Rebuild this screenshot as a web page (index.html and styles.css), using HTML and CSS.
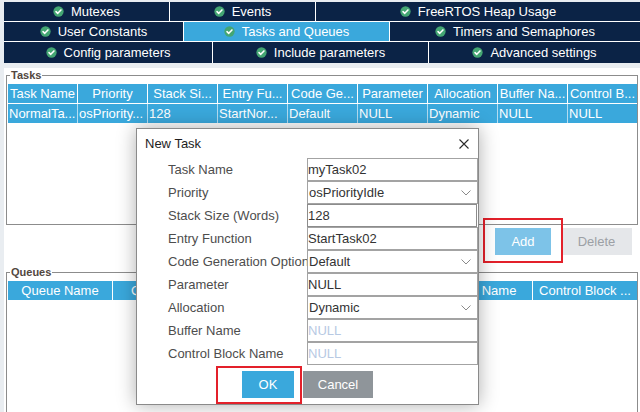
FILE: index.html
```html
<!DOCTYPE html>
<html lang="en">
<head>
<meta charset="utf-8">
<title>FreeRTOS Configuration</title>
<link rel="stylesheet" href="styles.css">
</head>
<body>
<div class="app">
  <nav class="tabs">
    <div class="tab-row">
      <div class="tab w-mutexes"><svg class="ok" viewBox="0 0 12 12"><circle cx="6" cy="6" r="5.6" fill="#44a673"/><path d="M3.3 6.1 5.2 8 8.7 4.3" fill="none" stroke="#fff" stroke-width="1.7" stroke-linecap="round" stroke-linejoin="round"/></svg>Mutexes</div>
      <div class="tab w-events"><svg class="ok" viewBox="0 0 12 12"><circle cx="6" cy="6" r="5.6" fill="#44a673"/><path d="M3.3 6.1 5.2 8 8.7 4.3" fill="none" stroke="#fff" stroke-width="1.7" stroke-linecap="round" stroke-linejoin="round"/></svg>Events</div>
      <div class="tab grow"><svg class="ok" viewBox="0 0 12 12"><circle cx="6" cy="6" r="5.6" fill="#44a673"/><path d="M3.3 6.1 5.2 8 8.7 4.3" fill="none" stroke="#fff" stroke-width="1.7" stroke-linecap="round" stroke-linejoin="round"/></svg>FreeRTOS Heap Usage</div>
    </div>
    <div class="tab-row">
      <div class="tab w-user"><svg class="ok" viewBox="0 0 12 12"><circle cx="6" cy="6" r="5.6" fill="#44a673"/><path d="M3.3 6.1 5.2 8 8.7 4.3" fill="none" stroke="#fff" stroke-width="1.7" stroke-linecap="round" stroke-linejoin="round"/></svg>User Constants</div>
      <div class="tab w-tasks active"><svg class="ok" viewBox="0 0 12 12"><circle cx="6" cy="6" r="5.6" fill="#44a673"/><path d="M3.3 6.1 5.2 8 8.7 4.3" fill="none" stroke="#fff" stroke-width="1.7" stroke-linecap="round" stroke-linejoin="round"/></svg>Tasks and Queues</div>
      <div class="tab grow"><svg class="ok" viewBox="0 0 12 12"><circle cx="6" cy="6" r="5.6" fill="#44a673"/><path d="M3.3 6.1 5.2 8 8.7 4.3" fill="none" stroke="#fff" stroke-width="1.7" stroke-linecap="round" stroke-linejoin="round"/></svg>Timers and Semaphores</div>
    </div>
    <div class="tab-row last">
      <div class="tab w-config"><svg class="ok" viewBox="0 0 12 12"><circle cx="6" cy="6" r="5.6" fill="#44a673"/><path d="M3.3 6.1 5.2 8 8.7 4.3" fill="none" stroke="#fff" stroke-width="1.7" stroke-linecap="round" stroke-linejoin="round"/></svg>Config parameters</div>
      <div class="tab w-include"><svg class="ok" viewBox="0 0 12 12"><circle cx="6" cy="6" r="5.6" fill="#44a673"/><path d="M3.3 6.1 5.2 8 8.7 4.3" fill="none" stroke="#fff" stroke-width="1.7" stroke-linecap="round" stroke-linejoin="round"/></svg>Include parameters</div>
      <div class="tab grow"><svg class="ok" viewBox="0 0 12 12"><circle cx="6" cy="6" r="5.6" fill="#44a673"/><path d="M3.3 6.1 5.2 8 8.7 4.3" fill="none" stroke="#fff" stroke-width="1.7" stroke-linecap="round" stroke-linejoin="round"/></svg>Advanced settings</div>
    </div>
  </nav>

  <main class="panel">
    <fieldset class="group">
      <legend>Tasks</legend>
      <div class="tasks-body">
        <div class="grid cols-9 head">
          <div>Task Name</div><div>Priority</div><div>Stack Si...</div><div>Entry Fu...</div><div>Code Ge...</div><div>Parameter</div><div>Allocation</div><div>Buffer Na...</div><div>Control B...</div>
        </div>
        <div class="grid cols-9 row">
          <div>NormalTa...</div><div>osPriority...</div><div>128</div><div>StartNor...</div><div>Default</div><div>NULL</div><div>Dynamic</div><div>NULL</div><div>NULL</div>
        </div>
      </div>
    </fieldset>

    <div class="actions">
      <button class="btn btn-add">Add</button>
      <button class="btn btn-delete">Delete</button>
    </div>

    <fieldset class="group queues">
      <legend>Queues</legend>
      <div class="queues-body">
        <div class="grid cols-6 head">
          <div>Queue Name</div><div>Queue Size</div><div>Item Size</div><div>Allocation</div><div>Buffer Name</div><div>Control Block ...</div>
        </div>
      </div>
    </fieldset>
  </main>

  <div class="highlight hl-add"></div>

  <div class="dialog">
    <div class="dialog-title">
      <span>New Task</span>
      <svg class="close" viewBox="0 0 10 10"><path d="M0.5 0.5 9.5 9.5 M9.5 0.5 0.5 9.5" stroke="#2a2a2a" stroke-width="1.1" fill="none"/></svg>
    </div>
    <div class="form">
      <label>Task Name</label>
      <input class="field" type="text" value="myTask02">
      <label>Priority</label>
      <div class="field select"><span>osPriorityIdle</span><svg class="chev" viewBox="0 0 10 6"><path d="M0.5 0.5 5 5 9.5 0.5" fill="none" stroke="#8a8a8a" stroke-width="1"/></svg></div>
      <label>Stack Size (Words)</label>
      <input class="field focus" type="text" value="128">
      <label>Entry Function</label>
      <input class="field" type="text" value="StartTask02">
      <label>Code Generation Option</label>
      <div class="field select"><span>Default</span><svg class="chev" viewBox="0 0 10 6"><path d="M0.5 0.5 5 5 9.5 0.5" fill="none" stroke="#8a8a8a" stroke-width="1"/></svg></div>
      <label>Parameter</label>
      <input class="field" type="text" value="NULL">
      <label>Allocation</label>
      <div class="field select"><span>Dynamic</span><svg class="chev" viewBox="0 0 10 6"><path d="M0.5 0.5 5 5 9.5 0.5" fill="none" stroke="#8a8a8a" stroke-width="1"/></svg></div>
      <label>Buffer Name</label>
      <input class="field" type="text" placeholder="NULL">
      <label>Control Block Name</label>
      <input class="field" type="text" placeholder="NULL">
    </div>
    <div class="dialog-actions">
      <button class="btn btn-ok">OK</button>
      <button class="btn btn-cancel">Cancel</button>
    </div>
  </div>

  <div class="highlight hl-ok"></div>
</div>
</body>
</html>
```

FILE: styles.css
```css
* { box-sizing: border-box; }

html, body {
  margin: 0;
  height: 100%;
}

body {
  background: #e9edf1;
  font-family: "Liberation Sans", Arial, sans-serif;
  font-size: 13px;
  overflow: hidden;
}

.app {
  position: relative;
  width: 640px;
  height: 412px;
  padding: 2px 0 0 4px;
  display: flex;
  flex-direction: column;
  overflow: hidden;
}

/* ---------- tabs ---------- */
.tabs {
  display: flex;
  flex-direction: column;
  gap: 1px;
  background: #fff;
}

.tab-row {
  display: flex;
  gap: 1px;
  height: 19px;
}

.tab-row.last { height: 21px; }

.tab {
  display: flex;
  align-items: center;
  justify-content: center;
  gap: 7px;
  background: #0b2346;
  color: #fff;
  white-space: nowrap;
}

.tab.active { background: #3aa8dc; }

.tab.grow { flex: 1; }
.w-mutexes { width: 165px; }
.w-events { width: 145px; }
.w-user { width: 179px; }
.w-tasks { width: 205px; }
.w-config { width: 208px; }
.w-include { width: 215px; }

.ok {
  width: 11px;
  height: 11px;
  flex: none;
}

/* ---------- main panel ---------- */
.panel {
  flex: 1;
  min-height: 0;
  overflow: hidden;
  margin-top: 5px;
  background: #fff;
  padding-top: 1px;
}

.group {
  margin: 0 2px;
  border: 1px solid #8c8c8c;
  padding: 2px 0 0 1px;
  min-width: 0;
}

.group legend {
  margin-left: 2px;
  padding: 0 1px;
  font-size: 11px;
  font-weight: bold;
  line-height: 13px;
  color: #52473e;
}

.tasks-body { height: 140px; }

.grid {
  display: grid;
  column-gap: 1px;
  height: 19px;
}

.cols-9 { grid-template-columns: repeat(9, 69px); }
.cols-6 { grid-template-columns: repeat(6, 104px); }

.grid > div {
  background: #3aa8dc;
  color: #fff;
  line-height: 19px;
  white-space: nowrap;
  overflow: hidden;
}

.head > div { text-align: center; }

.row {
  margin-top: 1px;
  background: #b3dcf1;
}

.row > div { padding-left: 1px; }

.actions {
  display: flex;
  justify-content: flex-end;
  gap: 10px;
  padding: 3px 8px 0 0;
  margin-bottom: 11px;
}

.btn {
  border: none;
  height: 27px;
  font-family: "Liberation Sans", Arial, sans-serif;
  font-size: 13px;
  color: #fff;
  padding: 0;
}

.btn-add { width: 56px; background: #7dc3e8; }
.btn-delete { width: 71px; background: #e5e7ea; color: #9ca0a5; }

.queues { height: 160px; }

/* ---------- dialog ---------- */
.dialog {
  position: absolute;
  left: 136px;
  top: 128px;
  width: 343px;
  height: 277px;
  background: #fff;
  border: 1px solid #8a8a8a;
  box-shadow: 0 0 18px rgba(0, 0, 0, 0.32);
  display: flex;
  flex-direction: column;
}

.dialog-title {
  height: 29px;
  display: flex;
  align-items: center;
  justify-content: space-between;
  padding: 0 9px 0 8px;
  color: #1e1e1e;
}

.close {
  width: 10px;
  height: 10px;
}

.form {
  display: grid;
  grid-template-columns: 139px 171px;
  grid-auto-rows: 23px;
  align-items: center;
  padding-left: 31px;
}

.form label {
  color: #4d4d4d;
  white-space: nowrap;
}

.field {
  width: 100%;
  height: 23px;
  margin: 0;
  border: 1px solid #a3a3a3;
  padding: 0;
  background: #fff;
  font-family: "Liberation Sans", Arial, sans-serif;
  font-size: 13px;
  color: #333;
  outline: none;
}

.field::placeholder { color: #b7c9e3; }

.field.focus {
  width: 170px;
  border-color: #8c8c8c;
}

.select {
  display: flex;
  align-items: center;
  justify-content: space-between;
  padding: 0 6px 0 1px;
}

.chev {
  width: 10px;
  height: 6px;
}

.dialog-actions {
  display: flex;
  justify-content: center;
  gap: 9px;
  margin-top: 6px;
}

.btn-ok { width: 52px; background: #3aa8dc; }
.btn-cancel { width: 70px; background: #8f959a; }

/* ---------- annotation boxes ---------- */
.highlight {
  position: absolute;
  border: 2px solid #e3202a;
}

.hl-add { left: 483px; top: 218px; width: 80px; height: 45px; }
.hl-ok { left: 216px; top: 366px; width: 86px; height: 38px; }
```
